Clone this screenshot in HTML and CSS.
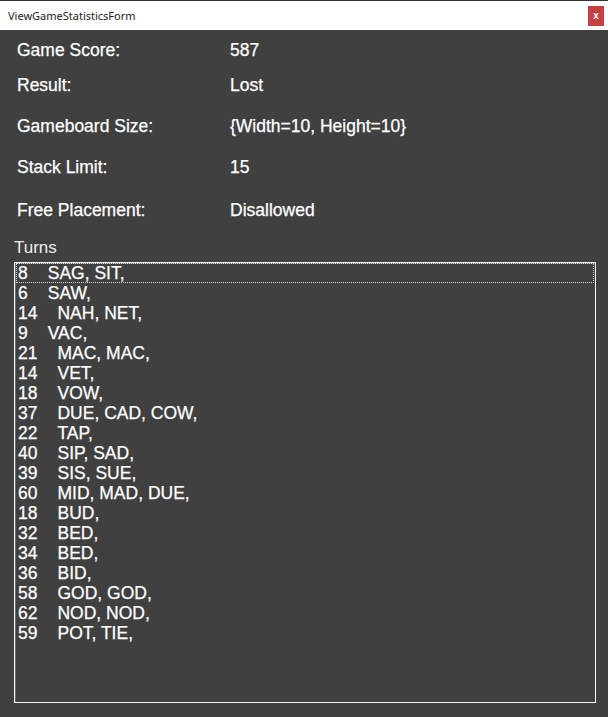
FILE: index.html
```html
<!DOCTYPE html>
<html lang="en">
<head>
	<meta charset="UTF-8">
	<title>ViewGameStatisticsForm</title>
	<link rel="stylesheet" href="styles.css">
</head>
<body>
	<div class="titlebar">
		<span class="title">ViewGameStatisticsForm</span>
		<span class="close">x</span>
	</div>

	<div class="form">
		<div class="stats">
			<div>Game Score:</div><div>587</div>
			<div>Result:</div><div>Lost</div>
			<div>Gameboard Size:</div><div>{Width=10, Height=10}</div>
			<div>Stack Limit:</div><div>15</div>
			<div>Free Placement:</div><div>Disallowed</div>
		</div>

		<div class="turns-label">Turns</div>
		<ul class="turns">
			<li class="focus"><span class="n">8</span>SAG, SIT,</li>
			<li><span class="n">6</span>SAW,</li>
			<li><span class="n">14</span>NAH, NET,</li>
			<li><span class="n">9</span>VAC,</li>
			<li><span class="n">21</span>MAC, MAC,</li>
			<li><span class="n">14</span>VET,</li>
			<li><span class="n">18</span>VOW,</li>
			<li><span class="n">37</span>DUE, CAD, COW,</li>
			<li><span class="n">22</span>TAP,</li>
			<li><span class="n">40</span>SIP, SAD,</li>
			<li><span class="n">39</span>SIS, SUE,</li>
			<li><span class="n">60</span>MID, MAD, DUE,</li>
			<li><span class="n">18</span>BUD,</li>
			<li><span class="n">32</span>BED,</li>
			<li><span class="n">34</span>BED,</li>
			<li><span class="n">36</span>BID,</li>
			<li><span class="n">58</span>GOD, GOD,</li>
			<li><span class="n">62</span>NOD, NOD,</li>
			<li><span class="n">59</span>POT, TIE,</li>
		</ul>
	</div>
</body>
</html>
```

FILE: styles.css
```css
*{margin:0;padding:0;box-sizing:border-box;}
html,body{height:100%;}
body{background:#404040;font-family:"Liberation Sans",Arial,sans-serif;color:#fff;}

.titlebar{height:30px;background:#fff;border-top:1px solid #333;display:flex;align-items:center;justify-content:space-between;padding:0 4px 0 8px;}
.title{font-family:"Noto Sans","Open Sans",sans-serif;font-size:11px;color:#222;}
.close{width:16px;height:20px;background:#c44242;color:#fff;font-family:"Liberation Sans",sans-serif;font-size:10px;font-weight:bold;display:flex;align-items:center;justify-content:center;}

.form{padding:10px 12px 0 14px;-webkit-text-stroke:0.25px #fff;}
.stats{display:grid;grid-template-columns:213px 1fr;grid-template-rows:35px 41px 41px 43px 38px;padding-left:3px;font-size:17.5px;line-height:20px;}
.turns-label{font-size:17px;line-height:20px;color:#eee;-webkit-text-stroke:0;}
.turns{list-style:none;height:441px;margin-top:4px;border:1px solid #f4f4f4;box-shadow:inset 1px 1px 0 #6a6a6a;padding:0 1px;font-size:17.5px;line-height:20px;}
.turns li{padding-left:2px;white-space:nowrap;}
.turns .focus{outline:1px dotted #d8d8d8;outline-offset:-1px;}
.n{margin-right:20px;}
```
